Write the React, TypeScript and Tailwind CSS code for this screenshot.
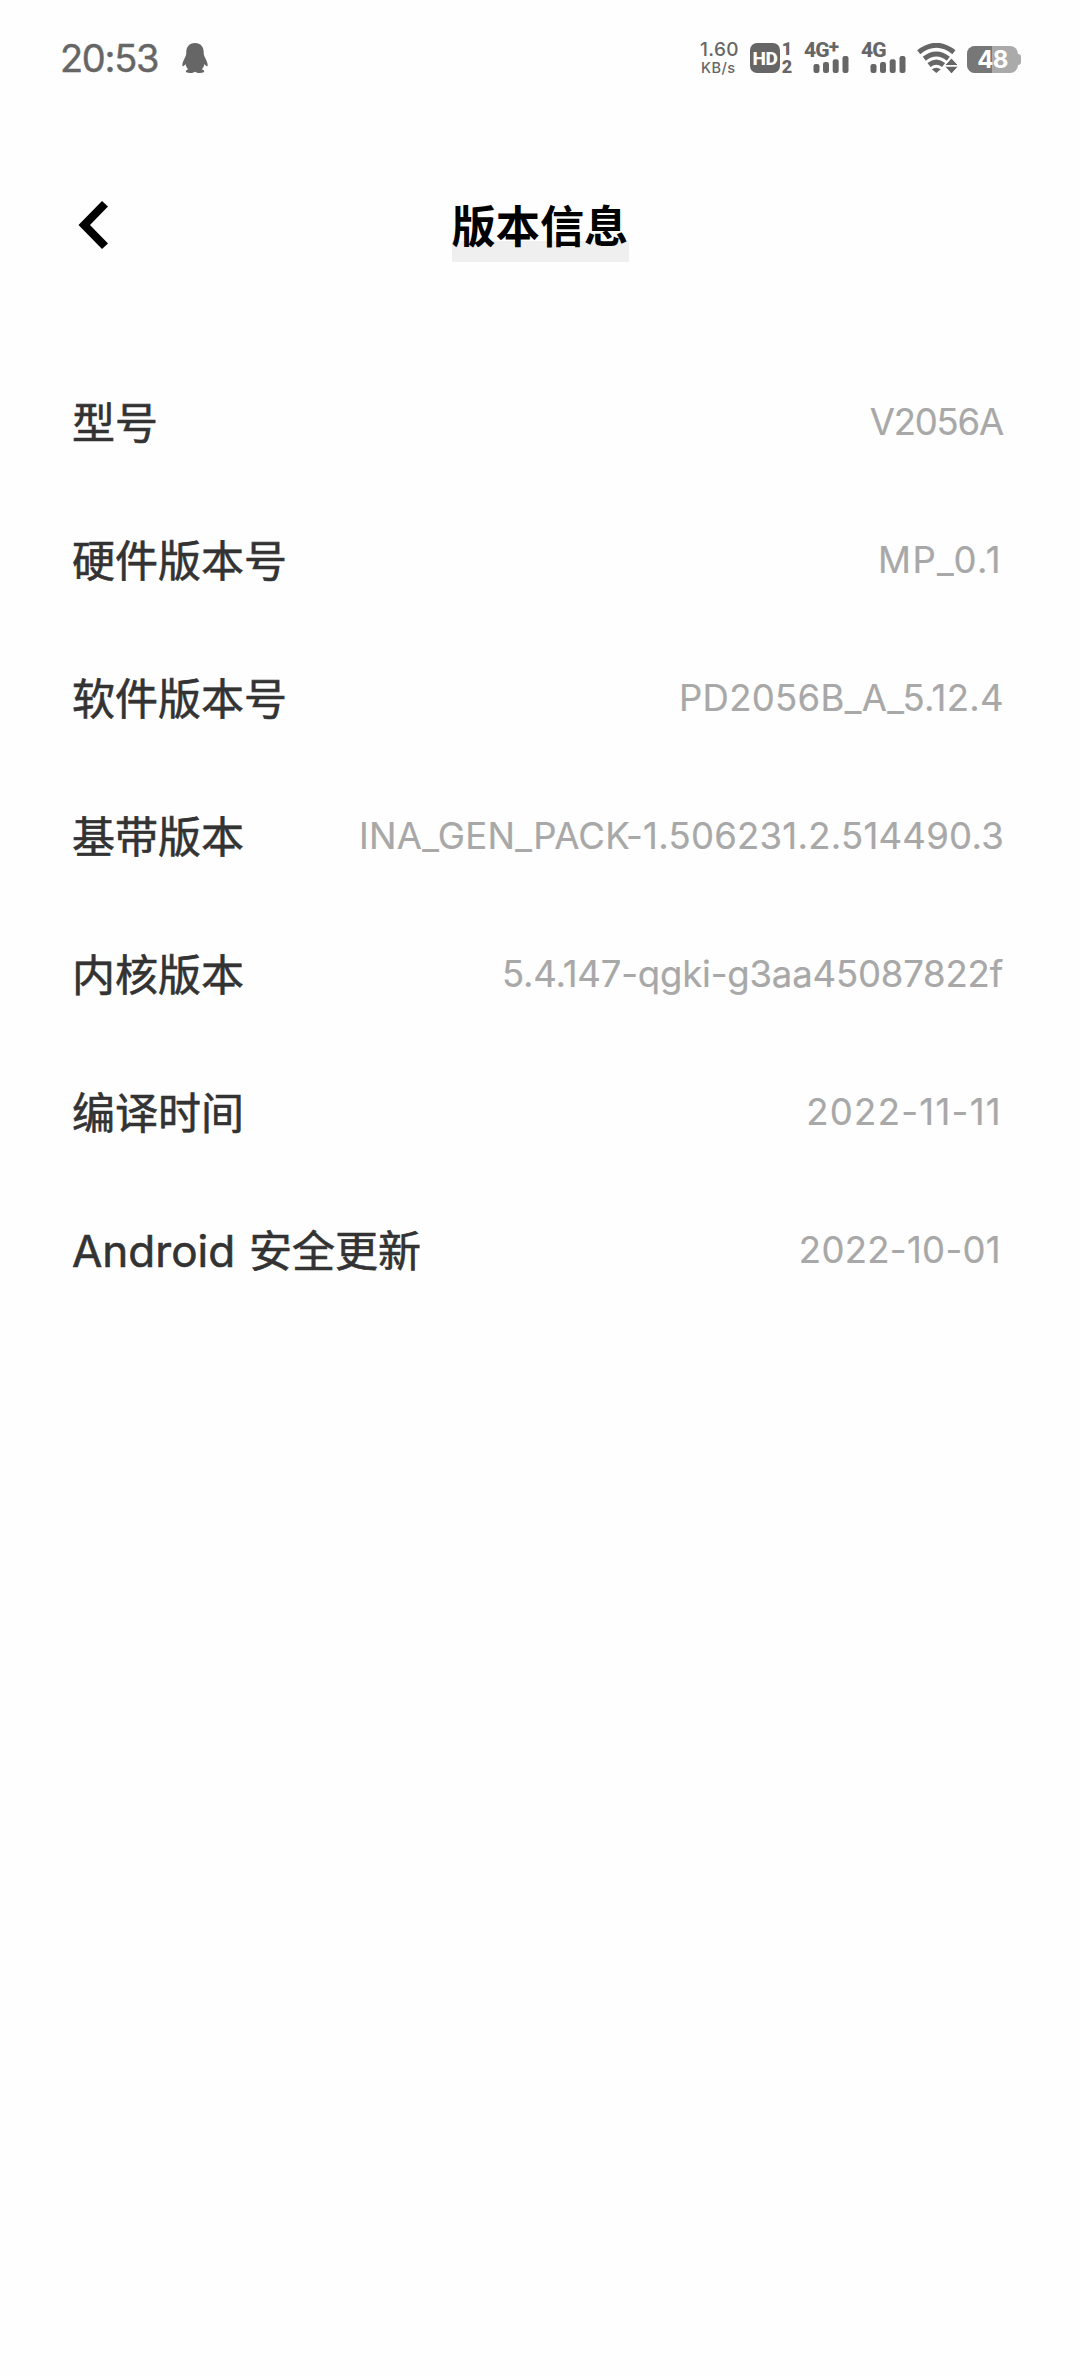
import React from "react";

const rows = [
  { label: "型号", value: "V2056A", spacing: "mr-[4px] tracking-[-1.2px]" },
  { label: "硬件版本号", value: "MP_0.1", spacing: "mr-[5px] tracking-[1.4px]" },
  { label: "软件版本号", value: "PD2056B_A_5.12.4", spacing: "mr-[3px] tracking-[0.3px]" },
  { label: "基带版本", value: "INA_GEN_PACK-1.506231.2.514490.3", spacing: "mr-[3px] tracking-[0.25px]" },
  { label: "内核版本", value: "5.4.147-qgki-g3aa45087822f", spacing: "mr-[4px] tracking-[-0.18px]" },
  { label: "编译时间", value: "2022-11-11", spacing: "mr-[5px] tracking-[1.3px]" },
  { label: "安全更新", prefix: "Android", value: "2022-10-01", spacing: "mr-[6px] tracking-[0.3px]" },
];

function Signal({ plus, className }: { plus?: boolean; className: string }) {
  return (
    <div className={`relative h-[30px] w-[45px] ${className}`}>
      <span className="absolute top-[-2px] left-0 flex font-['Roboto'] text-[21px] leading-[18px] font-extrabold tracking-[-0.8px] whitespace-nowrap">
        4G
        {plus && <span className="-mt-[2px] text-[19px] leading-[16px]">+</span>}
      </span>
      <svg className="absolute right-0 bottom-0" width="36" height="17" viewBox="0 0 36 17" fill="#666">
        <rect x="0.5" y="8" width="6" height="9" rx="2.2" />
        <rect x="10" y="6" width="6" height="11" rx="2.2" />
        <rect x="19.7" y="3.2" width="6" height="13.8" rx="2.2" />
        <rect x="29.5" y="0" width="6" height="17" rx="2.2" />
      </svg>
    </div>
  );
}

function StatusBar() {
  return (
    <div className="flex h-[116px] items-center pl-[60px] pr-[59px] text-[#666]">
      <span className="w-[122px] text-[38px] leading-none tracking-[-1.3px] [-webkit-text-stroke:0.4px_#666]">20:53</span>
      <svg width="26" height="30" viewBox="0 0 26 30" fill="#666">
        <path d="M13 0C7.200 0 4.300 4 4.300 9c0 1.800-.2 3-.8 4.500C2.300 16 0.300 19.500 0.300 22c0 1.400.6 1.600 1.200 1.100.8-.6 1.500-1.500 2-2.200.4 2 1.400 4 2.700 5.300-1.500.5-2.400 1.200-2.400 2.100C3.800 29.500 5.500 30 8 30c2.200 0 3.800-.5 5-1.300 1.200.8 2.800 1.300 5 1.300 2.500 0 4.200-.5 4.200-1.700 0-.9-.9-1.600-2.400-2.100 1.300-1.300 2.300-3.300 2.700-5.300.5.7 1.200 1.600 2 2.200.6.5 1.200.3 1.200-1.100 0-2.500-2-6-3.200-8.500-.6-1.500-.8-2.700-.8-4.500C21.700 4 18.800 0 13 0z" />
      </svg>
      <div className="ml-auto flex h-[30px] items-start">
        <div className="w-[51px] pl-[1px] font-medium">
          <div className="h-[17px] text-[19px] leading-[14px] tracking-[0.4px]">1.60</div>
          <div className="pl-[1px] text-[14.500px] leading-[16px] tracking-[0.5px]">KB/s</div>
        </div>
        <div className="flex size-[30px] items-center justify-center rounded-[7px] bg-[#666] font-['Roboto'] text-[19px] leading-none font-extrabold tracking-[-0.4px] text-white">
          HD
        </div>
        <div className="ml-[1px] flex h-[30px] w-[12px] flex-col items-center justify-between font-['Roboto'] text-[18px] leading-[12px] font-black">
          <span>1</span>
          <span>2</span>
        </div>
        <Signal plus className="ml-[11px]" />
        <Signal className="ml-[12px]" />
        <svg className="ml-[11px]" width="41" height="30" viewBox="0 0 41 30" fill="none">
          <g stroke="#666" strokeWidth="5">
            <path d="M1.700 9.200Q19.300-4.600 36.900 9.200" />
            <path d="M7.300 15.800Q19.300 6.300 31.300 15.800" />
            <path d="M12 22Q19.300 16.100 26.600 22" />
          </g>
          <path d="M14.800 26.300Q19.300 23 23.800 26.300L19.300 30z" fill="#666" />
          <path d="M34.500 15 41.500 22.500H27.500z M27.500 23.200H41.500L34.500 31z" fill="#666" stroke="white" strokeWidth="1" />
        </svg>
        <div className="mt-[3px] ml-[9px] flex items-center">
          <div className="relative flex h-[27px] w-[51px] overflow-hidden rounded-[8px] bg-[#aaa]">
            <div className="h-full w-[25px] bg-[#777]" />
            <span className="absolute inset-0 flex items-center justify-center text-[24px] leading-none font-bold tracking-[-0.8px] text-white">
              48
            </span>
          </div>
          <div className="h-[11px] w-[3px] rounded-r-[3px] bg-[#aaa]" />
        </div>
      </div>
    </div>
  );
}

export default function App() {
  return (
    <div className="min-h-[2376px] w-[1080px] bg-[#fefefe] font-['Inter','Noto_Sans_CJK_SC',sans-serif]">
      <StatusBar />
      <header className="grid h-[218px] grid-cols-[1fr_auto_1fr] items-center">
        <svg className="ml-[78px]" width="31" height="50" viewBox="0 0 31 50">
          <path d="M0.500 25 24 1 30 6.500 12 25 30 43.500 24 49z" fill="#000" />
        </svg>
        <h1 className="h-[73px] w-[177px] bg-[linear-gradient(to_bottom,transparent_52px,#efefef_52px)] pt-[3px] text-[44.200px] leading-[71px] font-bold whitespace-nowrap text-black">
          版本信息
        </h1>
      </header>
      <main className="mt-[19px] flex flex-col pr-[73px] pl-[72px]">
        {rows.map((r) => (
          <div key={r.label} className="flex h-[138px] items-center justify-between whitespace-nowrap">
            <span className="mt-[1px] flex items-baseline text-[43px] leading-[60px] font-normal text-[#333] [-webkit-text-stroke:0.6px_#333]">
              {r.prefix && <span className="w-[177px] text-[44px]">{r.prefix}</span>}
              {r.label}
            </span>
            <span className={`text-[36.500px] leading-[60px] text-[#a8a8a8] [-webkit-text-stroke:0.2px_#a8a8a8] ${r.spacing}`}>{r.value}</span>
          </div>
        ))}
      </main>
    </div>
  );
}
